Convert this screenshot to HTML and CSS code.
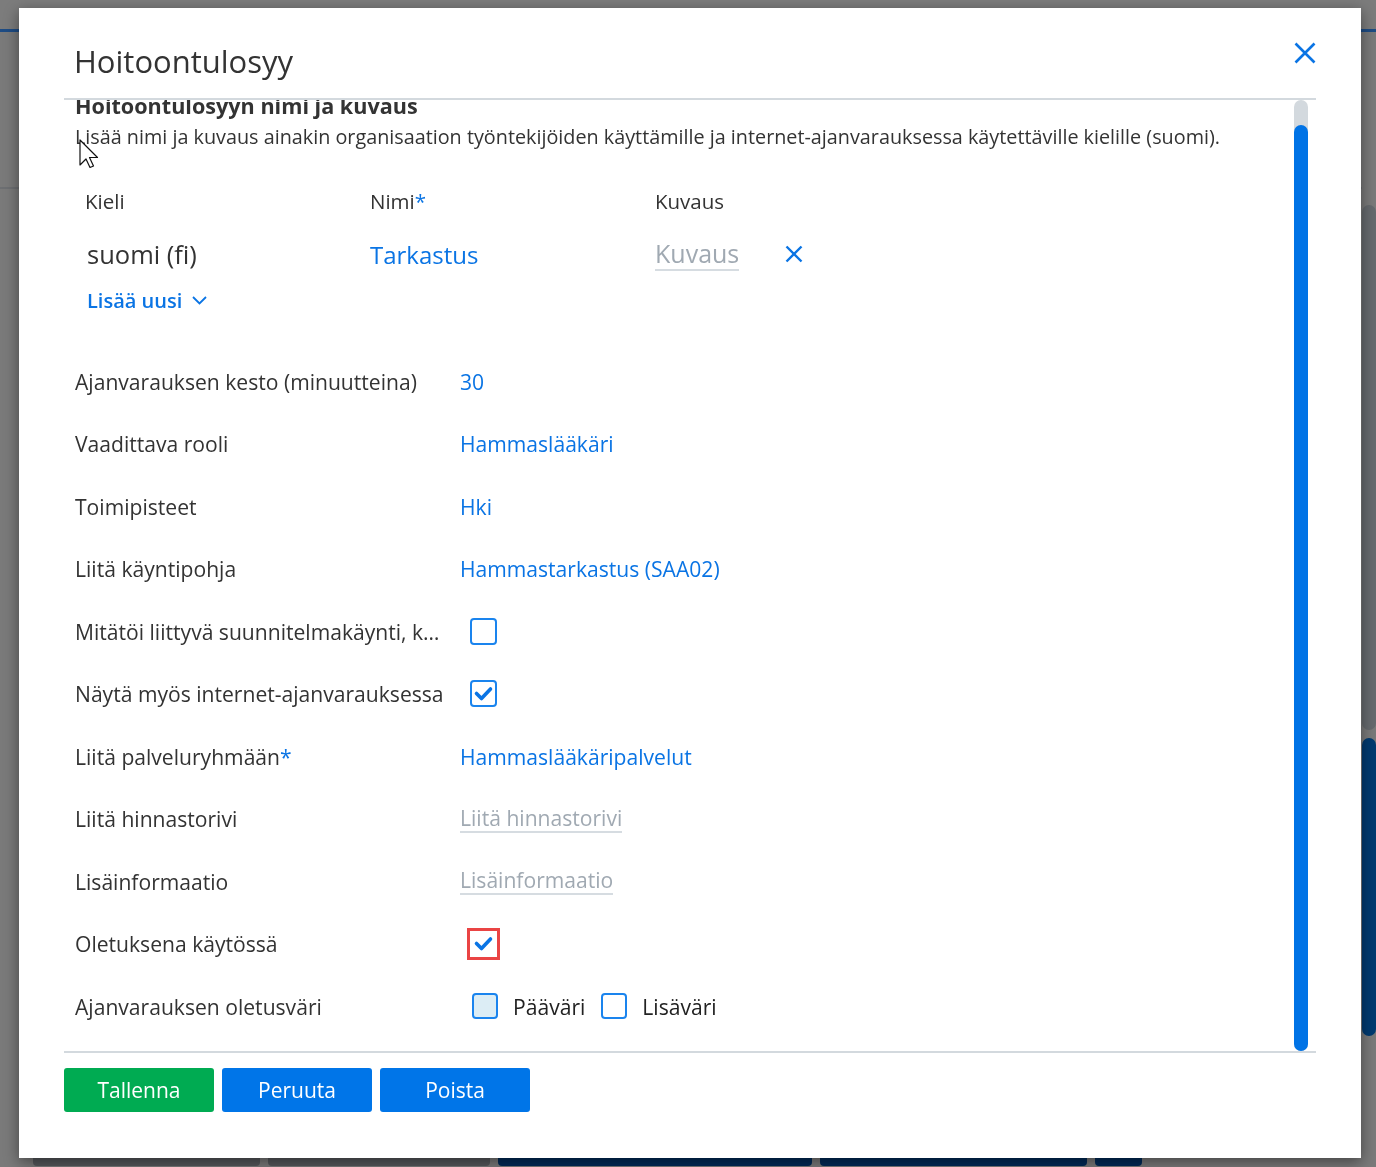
FILE: index.html
```html
<!DOCTYPE html>
<html lang="fi">
<head>
    <meta charset="UTF-8">
    <meta name="viewport" content="width=device-width, initial-scale=1.0">
    <title>Hoitoontulosyy</title>
    <link rel="stylesheet" href="styles.css">
</head>
<body>
    <!-- Dimmed application behind the dialog -->
    <div class="app">
        <div class="app-top"></div>
        <div class="app-rule"></div>
        <div class="app-main">
            <div class="app-page">
                <div class="app-band"></div>
                <div class="app-tiles">
                    <span class="tile tile-gray w-227"></span>
                    <span class="tile tile-gray w-222"></span>
                    <span class="tile tile-navy w-314"></span>
                    <span class="tile tile-navy w-267"></span>
                    <span class="tile tile-navy w-47"></span>
                </div>
            </div>
            <div class="app-scroll">
                <div class="app-thumb gray"></div>
                <div class="app-thumb navy"></div>
            </div>
        </div>
    </div>

    <div class="modal">
        <div class="modal-header">
            <h1 class="modal-title">Hoitoontulosyy</h1>
            <button class="icon-btn close-btn" aria-label="Sulje">
                <svg width="22" height="22" viewBox="0 0 22 22"><path d="M1.5 1.5 L20.5 20.5 M20.5 1.5 L1.5 20.5" stroke="#0a74e4" stroke-width="2.6" fill="none"/></svg>
            </button>
        </div>

        <div class="modal-body">
            <div class="modal-content">
                <div class="content-inner">
                    <h2 class="section-title">Hoitoontulosyyn nimi ja kuvaus</h2>
                    <p class="hint">Lisää nimi ja kuvaus ainakin organisaation työntekijöiden käyttämille ja internet-ajanvarauksessa käytettäville kielille (suomi).</p>

                    <div class="lang-table">
                        <div class="th">Kieli</div>
                        <div class="th">Nimi<span class="req">*</span></div>
                        <div class="th">Kuvaus</div>
                        <div class="th"></div>

                        <div class="td lang">suomi (fi)</div>
                        <div class="td name">Tarkastus</div>
                        <div class="td"><span class="placeholder big">Kuvaus</span></div>
                        <div class="td">
                            <button class="icon-btn" aria-label="Poista kieli">
                                <svg width="18" height="18" viewBox="0 0 18 18"><path d="M1.5 1.5 L16.5 16.5 M16.5 1.5 L1.5 16.5" stroke="#0a74e4" stroke-width="2.4" fill="none"/></svg>
                            </button>
                        </div>
                    </div>

                    <a class="add-new" href="#">Lisää uusi
                        <svg width="15" height="9" viewBox="0 0 15 9"><path d="M1 1 L7.5 7.5 L14 1" stroke="#0a74e4" stroke-width="1.8" fill="none"/></svg>
                    </a>

                    <div class="form">
                        <div class="form-row">
                            <div class="label">Ajanvarauksen kesto (minuutteina)</div>
                            <div class="value">30</div>
                        </div>
                        <div class="form-row">
                            <div class="label">Vaadittava rooli</div>
                            <div class="value">Hammaslääkäri</div>
                        </div>
                        <div class="form-row">
                            <div class="label">Toimipisteet</div>
                            <div class="value">Hki</div>
                        </div>
                        <div class="form-row">
                            <div class="label">Liitä käyntipohja</div>
                            <div class="value">Hammastarkastus (SAA02)</div>
                        </div>
                        <div class="form-row">
                            <div class="label">Mitätöi liittyvä suunnitelmakäynti, kun hoitoontulosyy poistetaan</div>
                            <div class="value"><span class="checkbox"></span></div>
                        </div>
                        <div class="form-row">
                            <div class="label">Näytä myös internet-ajanvarauksessa</div>
                            <div class="value">
                                <span class="checkbox">
                                    <svg width="23" height="23" viewBox="0 0 23 23"><path d="M4.5 11.5 L9.5 16.5 L18.5 7" stroke="#0a74e4" stroke-width="3.6" stroke-linecap="round" stroke-linejoin="round" fill="none"/></svg>
                                </span>
                            </div>
                        </div>
                        <div class="form-row">
                            <div class="label">Liitä palveluryhmään<span class="req">*</span></div>
                            <div class="value">Hammaslääkäripalvelut</div>
                        </div>
                        <div class="form-row">
                            <div class="label">Liitä hinnastorivi</div>
                            <div class="value"><span class="placeholder">Liitä hinnastorivi</span></div>
                        </div>
                        <div class="form-row">
                            <div class="label">Lisäinformaatio</div>
                            <div class="value"><span class="placeholder">Lisäinformaatio</span></div>
                        </div>
                        <div class="form-row">
                            <div class="label">Oletuksena käytössä</div>
                            <div class="value">
                                <span class="checkbox focused">
                                    <svg width="23" height="23" viewBox="0 0 23 23"><path d="M4.5 11.5 L9.5 16.5 L18.5 7" stroke="#0a74e4" stroke-width="3.6" stroke-linecap="round" stroke-linejoin="round" fill="none"/></svg>
                                </span>
                            </div>
                        </div>
                        <div class="form-row">
                            <div class="label">Ajanvarauksen oletusväri</div>
                            <div class="value colors">
                                <span class="checkbox tinted"></span>
                                <span class="color-name">Pääväri</span>
                                <span class="checkbox"></span>
                                <span class="color-name">Lisäväri</span>
                            </div>
                        </div>
                    </div>
                </div>
            </div>
            <div class="scrollbar">
                <div class="scroll-thumb"></div>
            </div>
        </div>

        <div class="modal-footer">
            <button class="btn btn-save">Tallenna</button>
            <button class="btn btn-primary">Peruuta</button>
            <button class="btn btn-primary">Poista</button>
        </div>
    </div>

    <!-- mouse pointer -->
    <svg class="cursor" width="20" height="30" viewBox="0 0 20 30">
        <path d="M1 1 L1 26 L7 20 L11 28.5 L14.5 27 L10.5 18.5 L18.5 18.5 Z" fill="#fff" stroke="#111" stroke-width="1.2" stroke-linejoin="round"/>
    </svg>
</body>
</html>
```

FILE: styles.css
```css
* {
    box-sizing: border-box;
    margin: 0;
    padding: 0;
    font-family: 'Open Sans', 'Noto Sans', sans-serif;
}

body {
    width: 1376px;
    height: 1167px;
    overflow: hidden;
    background-color: #7a7a7a;
}

/* background app (dimmed) */

.app {
    height: 100vh;
    display: flex;
    flex-direction: column;
}

.app-top {
    height: 29px;
    background-color: #7c7c7c;
}

.app-rule {
    height: 3px;
    background-color: #1e4c84;
}

.app-main {
    flex: 1;
    display: flex;
}

.app-page {
    flex: 1;
    display: flex;
    flex-direction: column;
    justify-content: space-between;
}

.app-band {
    margin-top: 155px;
    height: 2px;
    background-color: #6d6f72;
}

.app-tiles {
    display: flex;
    gap: 8px;
    padding-left: 33px;
    margin-bottom: 1px;
}

.tile {
    height: 12px;
    border-radius: 0 0 4px 4px;
}

.tile-gray { background-color: #55585c; }
.tile-navy { background-color: #002a58; }
.w-227 { width: 227px; }
.w-222 { width: 222px; }
.w-314 { width: 314px; }
.w-267 { width: 267px; }
.w-47 { width: 47px; }

.app-scroll {
    width: 14px;
    display: flex;
    flex-direction: column;
    padding-top: 173px;
    gap: 8px;
}

.app-thumb {
    border-radius: 7px;
}

.app-thumb.gray {
    height: 525px;
    background-color: #666a6e;
}

.app-thumb.navy {
    height: 298px;
    background-color: #003a70;
}

/* dialog */

.modal {
    position: fixed;
    top: 8px;
    left: 19px;
    width: 1342px;
    height: 1150px;
    background-color: white;
    box-shadow: 0 4px 14px rgba(0, 0, 0, 0.45);
    display: flex;
    flex-direction: column;
    padding: 0 45px;
}

.modal-header {
    flex: none;
    height: 92px;
    padding: 33px 0 0 10px;
    display: flex;
    justify-content: space-between;
    align-items: flex-start;
    border-bottom: 2px solid #d3d9de;
}

.modal-title {
    font-size: 31px;
    font-weight: 400;
    line-height: 40px;
    color: #333;
}

.icon-btn {
    background: none;
    border: none;
    cursor: pointer;
    display: flex;
}

.close-btn {
    margin-top: 1px;
}

.modal-body {
    flex: 1;
    display: flex;
    min-height: 0;
    border-bottom: 2px solid #d3d9de;
}

.modal-content {
    flex: 1;
    overflow: hidden;
    padding-left: 11px;
}

.content-inner {
    margin-top: -8px;
}

.section-title {
    font-size: 21.6px;
    font-weight: 700;
    line-height: 28px;
    color: #333;
}

.hint {
    margin-top: 2px;
    font-size: 19.8px;
    line-height: 30px;
    color: #333;
}

.lang-table {
    margin: 34px 0 0 10px;
    display: grid;
    grid-template-columns: 285px 285px 130px 40px;
    grid-template-rows: 30px 40px;
    row-gap: 18px;
    align-items: center;
}

.th {
    font-size: 20.5px;
    color: #333;
}

.req {
    color: #0a74e4;
}

.td.lang {
    font-size: 25.5px;
    color: #333;
    padding-left: 2px;
}

.td.name {
    font-size: 24px;
    color: #0a74e4;
}

.placeholder {
    color: #a0a9b2;
    font-size: 21.1px;
    border-bottom: 2px solid #d6dce1;
    line-height: 26px;
    display: inline-block;
}

.placeholder.big {
    font-size: 25px;
    line-height: 32px;
}

.add-new {
    margin: 11px 0 0 12px;
    display: inline-flex;
    align-items: center;
    gap: 10px;
    height: 30px;
    color: #0a74e4;
    font-size: 20px;
    font-weight: 600;
    text-decoration: none;
}

.form {
    margin-top: 35px;
}

.form-row {
    display: grid;
    grid-template-columns: 385px 1fr;
    align-items: center;
    height: 62.5px;
    font-size: 21.1px;
}

.label {
    color: #333;
    max-width: 370px;
    white-space: nowrap;
    overflow: hidden;
    text-overflow: ellipsis;
}

.value {
    color: #0a74e4;
    display: flex;
    align-items: center;
}

.checkbox {
    width: 27px;
    height: 27px;
    margin-left: 10px;
    border: 2px solid #1a84ee;
    border-radius: 4px;
    display: flex;
    align-items: center;
    justify-content: center;
    background-color: white;
}

.checkbox.focused {
    width: 33px;
    height: 32px;
    margin-left: 7px;
    border: 3px solid #ea4444;
    border-radius: 0;
}

.colors .checkbox {
    height: 26px;
    width: 26px;
    margin-left: 0;
}

.colors .checkbox.tinted {
    background-color: #dcedf5;
    margin-left: 12px;
}

.color-name {
    color: #222;
    margin: 0 16px 0 15px;
}

.scrollbar {
    width: 14px;
    margin-right: 8px;
    background-color: #d3d9de;
    border-radius: 7px;
    display: flex;
    flex-direction: column;
    padding-top: 25px;
}

.scroll-thumb {
    flex: 1;
    background-color: #0073e6;
    border-radius: 7px;
}

.modal-footer {
    flex: none;
    display: flex;
    gap: 8px;
    padding: 15px 0 46px;
}

.btn {
    width: 150px;
    height: 44px;
    border: none;
    border-radius: 3px;
    color: white;
    font-size: 21px;
    cursor: pointer;
}

.btn-save {
    background-color: #00ab52;
}

.btn-primary {
    background-color: #0075e8;
}

.cursor {
    position: fixed;
    left: 79px;
    top: 139px;
}
```
